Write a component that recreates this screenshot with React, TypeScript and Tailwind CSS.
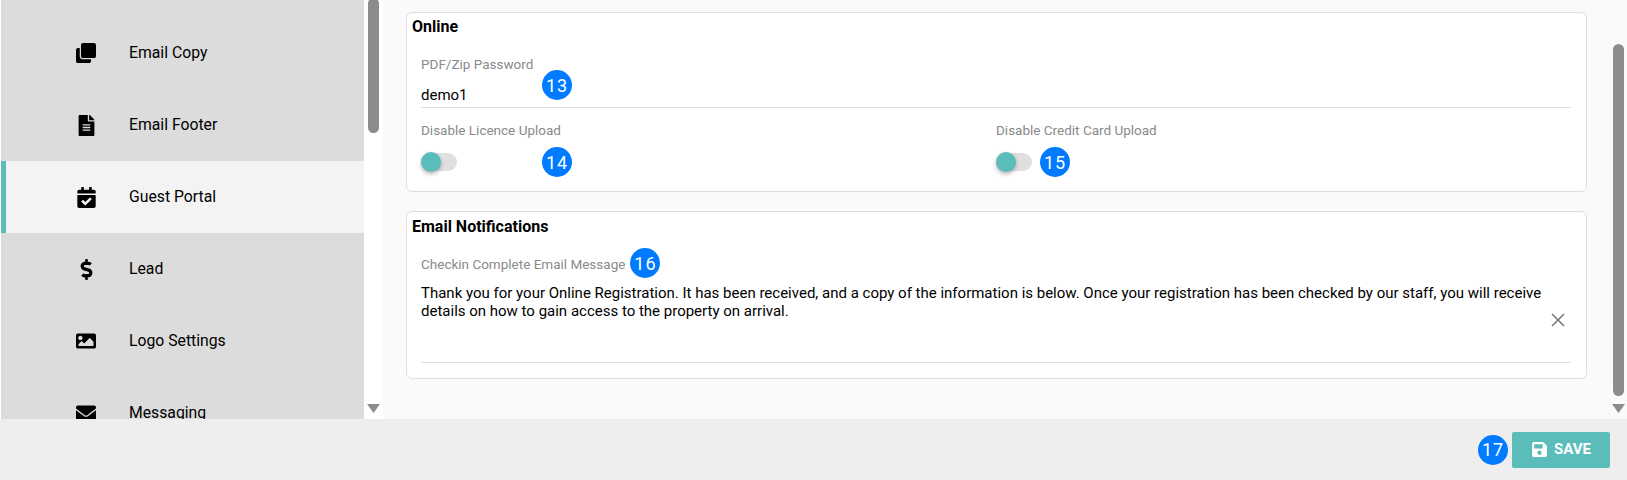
import React from "react";
import { FaClone, FaFileAlt, FaCalendarCheck, FaDollarSign, FaImage, FaEnvelope, FaSave } from "react-icons/fa";

const items = [
  { label: "Email Copy", icon: <FaClone size={20} /> },
  { label: "Email Footer", icon: <FaFileAlt size={21} /> },
  { label: "Guest Portal", icon: <FaCalendarCheck size={21} />, active: true },
  { label: "Lead", icon: <FaDollarSign size={21} /> },
  { label: "Logo Settings", icon: <FaImage size={20} /> },
  { label: "Messaging", icon: <FaEnvelope size={20} /> },
];

function Badge({ n }: { n: number }) {
  return (
    <span className="flex h-[30px] w-[30px] shrink-0 items-center justify-center rounded-full bg-[#007bff] text-[18px] tracking-[1px] text-white">
      {n}
    </span>
  );
}

function Toggle() {
  return (
    <span className="flex h-5 w-9 items-center">
      <span className="relative h-[18px] w-9 rounded-full bg-[#e0e0e0]">
        <span className="absolute -top-px left-0 h-5 w-5 rounded-full bg-[#5bbdb9] shadow-[0_2px_4px_rgba(0,0,0,0.3)]" />
      </span>
    </span>
  );
}

function Track({ top, height, wide }: { top: number; height: number; wide?: boolean }) {
  return (
    <div className={wide ? "flex h-full w-[19px] shrink-0 flex-col items-center" : "flex h-full w-[18px] shrink-0 flex-col items-center"}>
      <div className="w-[11px] shrink-0 rounded-[6px] bg-[#8c8c8c]" style={{ marginTop: top, height }} />
      <div className="flex-1" />
      <svg width="13" height="9" viewBox="0 0 13 9" className="mb-[6px] shrink-0">
        <path d="M0 0h13L6.500 9z" fill="#8c8c8c" />
      </svg>
    </div>
  );
}

export default function App() {
  return (
    <div className="flex h-[480px] w-[1627px] flex-col overflow-hidden bg-white font-['Roboto',sans-serif] text-black">
      <div className="flex h-[419px] shrink-0">
        <aside className="ml-px h-full w-[363px] shrink-0 overflow-hidden bg-[#dcdcdc]">
          <div className="-mt-[55px]">
            <div className="h-[72px]" />
            {items.map((it) => (
              <div
                key={it.label}
                className={
                  it.active
                    ? "flex h-[72px] items-center border-l-[5px] border-[#5bbdb9] bg-[#f3f3f3]"
                    : "flex h-[72px] items-center border-l-[5px] border-transparent"
                }
              >
                <span className="ml-[45px] flex w-[70px] justify-center">{it.icon}</span>
                <span className="ml-[8px] text-[15.75px]">{it.label}</span>
              </div>
            ))}
          </div>
        </aside>
        <Track top={-2} height={135} wide />
        <main className="flex h-full min-w-0 flex-1 bg-[#fafafa]">
          <div className="min-w-0 flex-1 pl-[23px] pr-[22px] pt-3">
            <section className="h-[180px] rounded-[6px] border border-[#dedede] bg-white pl-[5px] pr-[15px]">
              <h2 className="pt-[5px] text-[16px] leading-[18px] font-bold">Online</h2>
              <div className="relative ml-[9px] mt-[19px] border-b border-[#e0e0e0] pb-[2px]">
                <div className="flex h-[30px] items-center">
                  <span className="-mt-[13px] text-[13.5px] leading-[16px] text-[#8a8a8a]">PDF/Zip Password</span>
                </div>
                <div className="text-[15px] leading-[20px]">demo1</div>
                <span className="absolute left-[121px] top-[15px]"><Badge n={13} /></span>
              </div>
              <div className="ml-[9px] mt-[14px] grid grid-cols-[575px_1fr]">
                <div>
                  <div className="text-[13.5px] leading-[16px] text-[#8a8a8a]">Disable Licence Upload</div>
                  <div className="mt-[9px] flex h-[30px] items-center">
                    <Toggle />
                    <span className="ml-[85px]"><Badge n={14} /></span>
                  </div>
                </div>
                <div>
                  <div className="text-[13.5px] leading-[16px] text-[#8a8a8a]">Disable Credit Card Upload</div>
                  <div className="mt-[9px] flex h-[30px] items-center">
                    <Toggle />
                    <span className="ml-[8px]"><Badge n={15} /></span>
                  </div>
                </div>
              </div>
            </section>
            <section className="mt-[19px] h-[168px] rounded-[6px] border border-[#dedede] bg-white pl-[5px] pr-[15px]">
              <h2 className="pt-[6px] text-[16px] leading-[18px] font-bold">Email Notifications</h2>
              <div className="ml-[9px]">
                <div className="mt-[12px] flex h-[30px] items-center gap-[5px]">
                  <span className="mt-[2px] text-[13.5px] leading-[16px] text-[#8a8a8a]">Checkin Complete Email Message</span>
                  <Badge n={16} />
                </div>
                <div className="relative h-[85px] border-b border-[#e0e0e0] pt-[6px] text-[15px] leading-[18px]">
                  <p className="w-[1130px]">
                    Thank you for your Online Registration. It has been received, and a copy of the information is below. Once your registration has been checked by our staff, you will receive details on how to gain access to the property on arrival.
                  </p>
                  <svg width="14" height="14" viewBox="0 0 14 14" className="absolute right-[6px] top-[35px]">
                    <path d="M1 1l12 12M13 1L1 13" stroke="#757575" strokeWidth="1.500" fill="none" />
                  </svg>
                </div>
              </div>
            </section>
          </div>
          <Track top={44} height={352} />
        </main>
      </div>
      <footer className="flex flex-1 items-center justify-end bg-[#eeeeee] pr-[17px]">
        <Badge n={17} />
        <button className="ml-[4px] flex h-9 w-[98px] items-center justify-center gap-[6px] rounded-[2px] bg-[#5bbdb9] text-[15px] font-bold text-white">
          <FaSave size={17} />
          SAVE
        </button>
      </footer>
    </div>
  );
}
